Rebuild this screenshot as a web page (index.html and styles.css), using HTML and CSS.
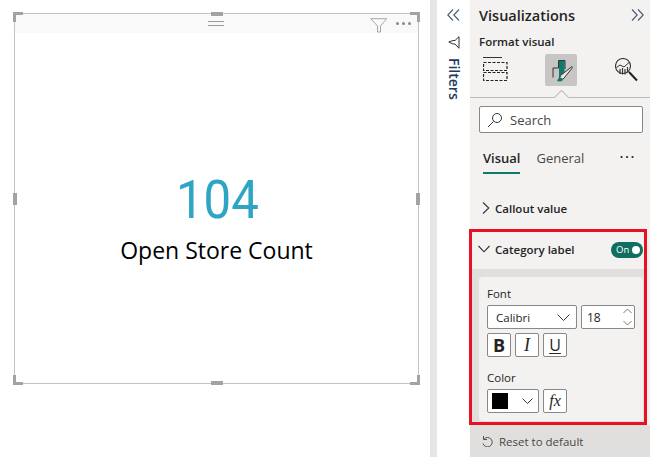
FILE: index.html
```html
<!DOCTYPE html>
<html lang="en">
<head>
    <meta charset="UTF-8">
    <meta name="viewport" content="width=device-width, initial-scale=1.0">
    <title>Format visual</title>
    <link rel="stylesheet" href="styles.css">
</head>
<body>
    <div class="canvas">
        <div class="visual">
            <div class="visual-head">
                <svg class="grip" width="16" height="5" viewBox="0 0 16 5"><path d="M0 .5h16M0 4.5h16" stroke="#9a9a9a"/></svg>
                <svg class="funnel" width="18" height="15" viewBox="0 0 18 15"><path d="M.7.7h16L10.5 8v6h-3V8z" fill="none" stroke="#a6a6a6"/></svg>
                <div class="dots"><i></i><i></i><i></i></div>
            </div>
            <div class="card-value">
                <div class="number">104</div>
                <div class="caption">Open Store Count</div>
            </div>
            <span class="corner tl"></span><span class="corner tr"></span>
            <span class="corner bl"></span><span class="corner br"></span>
            <span class="edge top"></span><span class="edge bottom"></span>
            <span class="edge-v left"></span><span class="edge-v right"></span>
        </div>
    </div>
    <div class="gutter"></div>
    <div class="filters">
        <svg width="13" height="12" viewBox="0 0 13 12"><path d="M6 .5.8 6 6 11.5M12 .5 6.800 6l5.200 5.500" fill="none" stroke="#4a5b72" stroke-width="1.100"/></svg>
        <svg class="filters-icon" width="12" height="13" viewBox="0 0 12 13"><path d="M11 .7v11.600L7 8H5L.8 6 5 4.500h2z" fill="none" stroke="#333" stroke-width="1"/></svg>
        <div class="filters-label">Filters</div>
    </div>
    <div class="panel">
        <div class="panel-head">
            <h1>Visualizations</h1>
            <svg width="13" height="12" viewBox="0 0 13 12"><path d="M1 .5 6.200 6 1 11.500M7 .5 12.200 6 7 11.500" fill="none" stroke="#4a5b72" stroke-width="1.100"/></svg>
        </div>
        <div class="format-title">Format visual</div>
        <div class="format-icons">
            <svg width="25" height="25" viewBox="0 0 25 25">
                <path d="M0 .5h19" stroke="#333"/>
                <path d="M.5 5.500h23.500v8H.5zM.5 15.500h23.500v8H.5z" fill="none" stroke="#222" stroke-width="1.200" stroke-dasharray="3 1.500"/>
            </svg>
            <div class="format-active">
                <svg width="24" height="26" viewBox="0 0 24 26">
                    <path d="M10 3h5.500v12L11 22h-1z" fill="#0f7b6c"/>
                    <path d="M9.500 3.500h6.500V12M9.500 3.500v7.500H4v9.500" fill="none" stroke="#333" stroke-width="1"/>
                    <path d="M10 23l1.500-4.500L23 9.500l.8.800-9.800 12z" fill="#e6e6e6" stroke="#333"/>
                    <path d="M8 24c2 .8 4 .8 6-1l-1-2-3-.5z" fill="#0f7b6c"/>
                </svg>
            </div>
            <svg class="analytics" width="24" height="24" viewBox="0 0 24 24">
                <circle cx="8" cy="8" r="7.500" fill="none" stroke="#333" stroke-width="1.100"/>
                <path d="M1.500 9.500 5 7l4 2 5-4.500" fill="none" stroke="#333"/>
                <path d="M5 11v5M7.500 10v6.500M10 11v5.500M12.500 9v5.500" stroke="#333" stroke-width="1.200"/>
                <path d="M14 14l8 8.500" stroke="#222" stroke-width="2"/>
            </svg>
        </div>
        <div class="format-rule"><span class="notch"></span></div>
        <div class="search">
            <svg width="16" height="16" viewBox="0 0 16 16"><circle cx="10" cy="6" r="4.500" fill="none" stroke="#333"/><path d="M6.500 9.500 1 15" stroke="#333"/></svg>
            <span>Search</span>
        </div>
        <div class="tabs">
            <div class="tab active">Visual</div>
            <div class="tab">General</div>
            <div class="tab-more">&middot;&middot;&middot;</div>
        </div>
        <div class="section-row callout">
            <svg width="8" height="12" viewBox="0 0 8 12"><path d="M1 .5 6.800 6 1 11.500" fill="none" stroke="#333" stroke-width="1.100"/></svg>
            <span>Callout value</span>
        </div>
        <div class="highlight">
            <div class="section-row category">
                <svg width="12" height="8" viewBox="0 0 12 8"><path d="M.5 1 6 6.800 11.500 1" fill="none" stroke="#333" stroke-width="1.100"/></svg>
                <span>Category label</span>
                <div class="toggle">On<i></i></div>
            </div>
            <div class="options">
                <div class="field-label">Font</div>
                <div class="field-row">
                    <div class="select font-select">Calibri
                        <svg width="13" height="7" viewBox="0 0 13 7"><path d="M.5.500 6.500 6.500l6-6" fill="none" stroke="#333"/></svg>
                    </div>
                    <div class="select size-select">18
                        <svg width="9" height="18" viewBox="0 0 9 18"><path d="M.5 5 4.500 1l4 4M.5 13l4 4 4-4" fill="none" stroke="#777"/></svg>
                    </div>
                </div>
                <div class="field-row">
                    <div class="btn bold">B</div>
                    <div class="btn italic">I</div>
                    <div class="btn underline">U</div>
                </div>
                <div class="field-label color-label">Color</div>
                <div class="field-row">
                    <div class="select color-select"><span class="swatch"></span>
                        <svg width="11" height="6" viewBox="0 0 11 6"><path d="M.5.500l5 5 5-5" fill="none" stroke="#333"/></svg>
                    </div>
                    <div class="btn fx">fx</div>
                </div>
            </div>
        </div>
        <div class="reset">
            <svg width="12" height="12" viewBox="0 0 12 12"><path d="M2.500 1v3.500H6M2.800 4.300A4.700 4.700 0 1 1 2 8.500" fill="none" stroke="#555"/></svg>
            <span>Reset to default</span>
        </div>
    </div>
</body>
</html>
```

FILE: styles.css
```css
* {
    box-sizing: border-box;
}

body {
    margin: 0;
    width: 650px;
    height: 457px;
    overflow: hidden;
    display: flex;
    font-family: "Open Sans", "Noto Sans", sans-serif;
    color: #252423;
    background-color: #fff;
}

/* report canvas */
.canvas {
    width: 430px;
    padding: 13px 0 0 14px;
}

.visual {
    position: relative;
    width: 405px;
    height: 371px;
    border: 1px solid #c4c4c4;
    display: flex;
    flex-direction: column;
}

.visual-head {
    height: 19px;
    background-color: #f9f9f9;
    display: flex;
    align-items: center;
    padding-left: 193px;
}

.grip {
    margin-top: -1px;
}

.funnel {
    margin-left: 146px;
    margin-top: 3px;
}

.dots {
    display: flex;
    gap: 3px;
    margin-left: 8px;
}

.dots i {
    width: 3px;
    height: 3px;
    border-radius: 50%;
    background-color: #8a8a8a;
}

.card-value {
    flex: 1;
    text-align: center;
    padding-top: 137px;
}

.number {
    font-family: Roboto, sans-serif;
    font-weight: 400;
    font-size: 54px;
    line-height: 60px;
    color: #2fa5c4;
    padding-left: 2px;
    transform: scaleX(.91);
}

.caption {
    font-size: 23px;
    line-height: 30px;
    color: #000;
    margin-top: 5px;
}

.corner {
    position: absolute;
    width: 10px;
    height: 10px;
    border: 0 solid #a3a3a3;
}

.tl { left: -2px; top: -2px; border-width: 3px 0 0 3px; }
.tr { right: -2px; top: -2px; border-width: 3px 3px 0 0; }
.bl { left: -2px; bottom: -2px; border-width: 0 0 3px 3px; }
.br { right: -2px; bottom: -2px; border-width: 0 3px 3px 0; }

.edge {
    position: absolute;
    left: 196px;
    width: 12px;
    height: 4px;
    background-color: #a3a3a3;
}

.edge.top { top: -2px; }
.edge.bottom { bottom: -2px; }

.edge-v {
    position: absolute;
    top: 179px;
    width: 4px;
    height: 12px;
    background-color: #a3a3a3;
}

.edge-v.left { left: -2px; }
.edge-v.right { right: -2px; }

/* filters pane */
.gutter {
    width: 7px;
    background-color: #e6e6e6;
}

.filters {
    width: 33px;
    display: flex;
    flex-direction: column;
    align-items: center;
    padding-top: 9px;
}

.filters-icon {
    margin-top: 15px;
}

.filters-label {
    writing-mode: vertical-rl;
    font-size: 14px;
    font-weight: 600;
    color: #1f3a5f;
    margin-top: 9px;
    line-height: 16px;
}

/* visualizations pane */
.panel {
    width: 180px;
    background-color: #f3f2f1;
    display: flex;
    flex-direction: column;
}

.panel-head {
    display: flex;
    justify-content: space-between;
    align-items: center;
    height: 32px;
    padding: 0 6px 2px 9px;
}

h1 {
    margin: 0;
    font-size: 14.500px;
    font-weight: 600;
    color: #252423;
}

.format-title {
    font-size: 11.500px;
    font-weight: 600;
    line-height: 16px;
    padding: 2px 0 0 9px;
}

.format-icons {
    display: flex;
    align-items: center;
    margin-top: 2px;
    padding: 1px 0 0 13px;
    height: 34px;
}

.format-active {
    width: 32px;
    height: 32px;
    background-color: #c8c6c4;
    border-radius: 2px;
    display: flex;
    align-items: center;
    justify-content: center;
    margin-left: 37px;
}

.analytics {
    margin-left: 38px;
}

.format-rule {
    position: relative;
    height: 9px;
    border-bottom: 1px solid #bdbbb9;
    margin-top: 3px;
}

.notch {
    position: absolute;
    left: 85.500px;
    top: 3px;
    width: 11px;
    height: 11px;
    background-color: #f3f2f1;
    border: 1px solid #bdbbb9;
    transform: rotate(45deg);
    border-width: 1px 0 0 1px;
}

.search {
    margin: 8px 7px 0 9px;
    height: 27px;
    background-color: #fff;
    border: 1px solid #8a8886;
    border-radius: 2px;
    display: flex;
    align-items: center;
    gap: 7px;
    padding-left: 7px;
    font-size: 13px;
    color: #484644;
}

.tabs {
    display: flex;
    align-items: flex-start;
    padding: 16px 0 0 13px;
    height: 60px;
}

.tab {
    font-size: 13px;
    line-height: 19px;
    padding-bottom: 4px;
    color: #484644;
    margin-right: 16px;
}

.tab.active {
    font-weight: 600;
    color: #252423;
    border-bottom: 2px solid #0f7b6c;
}

.tab-more {
    margin-left: 19px;
    font-size: 17px;
    line-height: 15px;
    letter-spacing: 1px;
}

.section-row {
    display: flex;
    align-items: center;
    font-size: 11.500px;
    font-weight: 600;
}

.callout {
    padding-left: 12px;
    gap: 5px;
    height: 30px;
    margin-bottom: 6px;
}

.highlight {
    width: 178px;
    height: 196px;
    margin-left: -1px;
    border: 3px solid #e81123;
    background-color: #e1dfdd;
}

.category {
    height: 37px;
    background-color: #f3f2f1;
    padding: 0 0 3px 6px;
    gap: 5px;
    position: relative;
}

.toggle {
    position: absolute;
    right: 1px;
    top: 10px;
    width: 32px;
    height: 16px;
    border-radius: 8px;
    background-color: #0f6e5f;
    color: #fff;
    font-size: 9.500px;
    font-weight: 400;
    line-height: 16px;
    padding-left: 5px;
}

.toggle i {
    position: absolute;
    right: 3px;
    top: 4px;
    width: 8px;
    height: 8px;
    border-radius: 50%;
    background-color: #fff;
}

.options {
    margin: 8px 1px 0 7px;
    height: 144px;
    background-color: #f3f2f1;
    border-radius: 4px;
    padding: 9px 8px 0;
}

.field-label {
    font-size: 11.500px;
    line-height: 16px;
    margin-bottom: 3px;
}

.color-label {
    margin-top: 13px;
    margin-bottom: 3px;
}

.field-row {
    display: flex;
    gap: 4px;
    margin-bottom: 4px;
}

.select {
    height: 24px;
    background-color: #fff;
    border: 1px solid #8a8886;
    border-radius: 2px;
    display: flex;
    align-items: center;
    justify-content: space-between;
    font-size: 11.500px;
}

.font-select {
    width: 90px;
    padding: 0 6px 0 8px;
}

.size-select {
    width: 54px;
    padding: 0 2px 0 5px;
    font-size: 12px;
}

.color-select {
    width: 52px;
    padding: 0 5px 0 4px;
}

.swatch {
    width: 16px;
    height: 16px;
    background-color: #000;
}

.btn {
    width: 24px;
    height: 24px;
    background-color: #fff;
    border: 1px solid #8a8886;
    border-radius: 2px;
    display: flex;
    align-items: center;
    justify-content: center;
    font-size: 15px;
    color: #252423;
}

.bold {
    font-weight: 700;
    font-size: 18px;
}

.italic {
    font-family: "Liberation Serif", serif;
    font-style: italic;
    font-size: 18px;
}

.underline {
    font-size: 16px;
    text-decoration: underline;
    text-underline-offset: 2px;
}

.fx {
    font-family: "Liberation Serif", serif;
    font-style: italic;
    font-size: 16px;
}

.reset {
    flex: 1;
    background-color: #e1dfdd;
    display: flex;
    align-items: center;
    gap: 6px;
    padding-left: 11px;
    font-size: 11.500px;
    color: #484644;
}
```
